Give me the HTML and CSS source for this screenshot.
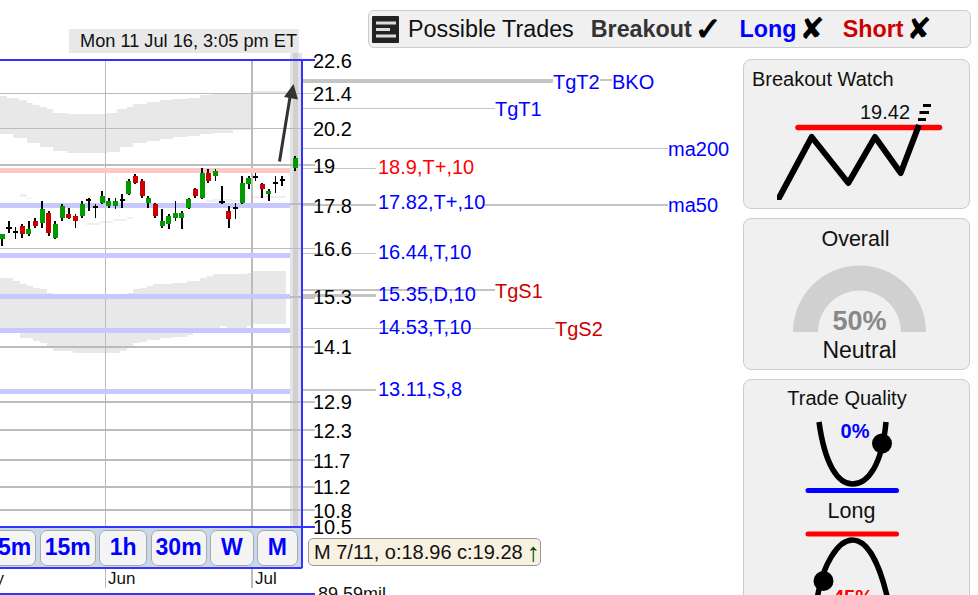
FILE: index.html
```html
<!DOCTYPE html>
<html lang="en">
<head>
<meta charset="utf-8">
<title>Possible Trades</title>
<link rel="stylesheet" href="styles.css">
</head>
<body>
<div class="page">
  <div class="chart">
    <svg class="canvas" width="743" height="595" viewBox="0 0 743 595">
      <rect class="stamp" x="69" y="29" width="230" height="24"/>
      <text class="t17" x="80" y="47">Mon 11 Jul 16, 3:05 pm ET</text>

      <rect class="band-light" x="290" y="53" width="12" height="474"/>
      <rect class="band-dark" x="293" y="53" width="5" height="474"/>

      <g transform="translate(0 20) scale(.33333)">
        <path class="cloud" d="M0 228H20V233H58V240H80V248H100V254H120V260H140V268H160V278H200V282H320V278H350V268H380V262H400V252H440V246H480V240H520V236H560V233H600V224H640V220H757V213H860V220H757V330H700V338H640V342H600V348H560V352H520V358H480V362H440V368H400V380H360V395H320V400H200V392H160V380H120V368H80V355H40V343H0Z"/>
        <path class="cloud-faint" d="M60 523H80V532H60ZM78 533H100V538H78ZM258 610H300V614H258ZM300 604H340V610H300ZM340 598H380V604H340ZM380 592H400V598H380ZM618 540H720V546H618ZM640 537H700V541H640ZM757 528H858V534H757Z"/>
      </g>
      <g transform="translate(0 240) scale(.33333)">
        <path class="cloud" d="M0 114H40V122H60V132H80V138H100V143H120V147H140V158H160V165H380V160H400V147H420V143H440V138H460V132H520V128H560V123H600V113H620V107H640V101H740V99H757V93H858V251H757V258H740V264H680V258H660V270H600V280H580V285H560V290H520V293H480V300H440V305H420V310H400V325H380V332H360V338H220V332H160V320H140V308H120V302H100V293H60V280H40V275H0Z"/>
      </g>

      <path class="grid" d="M105.5 60V527M105.5 568V588"/>
      <path class="grid2" d="M252 60V527M252 568V588"/>

      <path class="grid" d="M0 93.5H315M0 128.5H315M0 248.5H315"/>
      <path class="grid2" d="M0 165H315M0 204H315M0 297H315M0 347H315M0 402H315M0 430H315M0 460H315M0 487H315M0 509.5H315"/>

      <rect class="pink" x="0" y="168" width="290" height="5"/>
      <rect class="lilac" x="0" y="203" width="290" height="5"/>
      <rect class="lilac" x="0" y="253" width="290" height="5"/>
      <rect class="lilac" x="0" y="294" width="290" height="5"/>
      <rect class="lilac" x="0" y="328" width="290" height="5"/>
      <rect class="lilac" x="0" y="389" width="290" height="5"/>

      <g transform="translate(0 20) scale(.33333)">
        <path class="wick" d="M7 642V678M26 603V640M67 612V653M86 603V648M106 595V625M127 543V623M146 573V648M166 603V657M187 552V603M206 564V597M247 543V594M266 534V573M307 513V552M326 534V564M367 522V564M386 477V526M406 462V492M427 477V534M445 528V564M466 549V594M487 567V624M506 582V627M546 573V627M566 534V567M586 504V534M607 444V537M625 447V489M666 498V552M686 558V624M727 468V552M746 468V507M787 489V534M806 507V543M847 468V498M886 408V453"/>
        <path class="wick-thin" d="M46 620V657M226 582V623M286 552V594M346 534V567M526 543V603M646 447V483M706 549V597M766 460V483M826 468V519"/>
        <path class="dash" d="M17 625H35M38 635H54M258 539H274M279 560H294M359 539H375M658 547H674M698 565H714M758 470H774M819 489H833M839 480H855"/>
        <path class="up" d="M7 642V657M127 568V608M166 612V654M187 558V594M247 552V588M307 528V549M326 543V558M346 543V558M386 483V522M445 534V549M487 603V618M506 588V612M526 579V594M546 579V594M566 537V564M607 459V534M646 453V468M727 489V549M746 474V491M806 513V522M886 414V444M86 628V642"/>
        <path class="down" d="M67 618V642M106 603V618M146 580V638M206 583V594M226 588V603M406 468V489M427 483V528M466 552V588M586 507V528M625 459V484M686 573V597M787 492V507"/>
      </g>

      <path class="arrow-line" d="M279.5 161.5L290.5 94"/>
      <path class="arrow-head" d="M293.5 84L284 97L298 99.5Z"/>

      <path class="frame" d="M0 60H315M301.5 60V568M0 527H315M0 568H301.5M0 593.5H315M301.5 593.5V595"/>

      <path class="lead" d="M303 108.5H495M303 148.5H668M303 168.5H376M303 253.5H376M303 328.5H555M303 93.5H315M303 128.5H315"/>
      <path class="lead2" d="M303 165H315M303 204.5H376M484 205H668M303 290H495M303 347H315M303 390H376M303 402H315M303 430H315M303 460H315M303 487H315M303 510H315M600 80H612"/>
      <path class="lead4" d="M303 81H553"/>
      <path class="lead3" d="M303 295H376M303 297.500H315"/>

      <g class="prices">
        <text x="313" y="68">22.6</text>
        <text x="313" y="101">21.4</text>
        <text x="313" y="136">20.2</text>
        <text x="313" y="173">19</text>
        <text x="313" y="213">17.8</text>
        <text x="313" y="256">16.6</text>
        <text x="313" y="304">15.3</text>
        <text x="313" y="354">14.1</text>
        <text x="313" y="409">12.9</text>
        <text x="313" y="438">12.3</text>
        <text x="313" y="468">11.7</text>
        <text x="313" y="494">11.2</text>
        <text x="313" y="518">10.8</text>
        <text x="313" y="534">10.5</text>
      </g>

      <g class="notes">
        <text class="hot" x="378" y="174">18.9,T+,10</text>
        <text x="378" y="209">17.82,T+,10</text>
        <text x="378" y="259">16.44,T,10</text>
        <text x="378" y="301">15.35,D,10</text>
        <text x="378" y="334">14.53,T,10</text>
        <text x="378" y="396">13.11,S,8</text>
        <text x="553" y="89">TgT2</text>
        <text x="612" y="89">BKO</text>
        <text x="495" y="116">TgT1</text>
        <text x="668" y="156">ma200</text>
        <text x="668" y="212">ma50</text>
        <text class="stop" x="495" y="298">TgS1</text>
        <text class="stop" x="555" y="336">TgS2</text>
      </g>

      <text class="month" x="4" y="584" text-anchor="end">May</text>
      <text class="month" x="108" y="584">Jun</text>
      <text class="month" x="255" y="584">Jul</text>
      <text class="vol" x="318" y="600">89.59mil</text>
    </svg>

    <div class="timeframes">
      <button class="tf">5m</button>
      <button class="tf">15m</button>
      <button class="tf tf-wide">1h</button>
      <button class="tf">30m</button>
      <button class="tf tf-w">W</button>
      <button class="tf tf-wide">M</button>
    </div>

    <div class="quote">M 7/11, o:18.96 c:19.28 <span class="quote-up">↑</span></div>
  </div>

  <header class="topbar">
    <svg class="menu" width="27" height="27" viewBox="0 0 27 27">
      <rect width="27" height="27" rx="1" fill="#222"/>
      <path d="M4 7H24M4 13.500H18M4 20H24" stroke="#ddd" stroke-width="3"/>
    </svg>
    <span class="topbar-title">Possible Trades</span>
    <span class="signal signal-breakout">Breakout<i class="mark mark-yes">✓</i></span>
    <span class="signal signal-long">Long<i class="mark mark-no">✘</i></span>
    <span class="signal signal-short">Short<i class="mark mark-no">✘</i></span>
  </header>

  <aside class="side">
    <section class="card card-watch">
      <h2 class="card-title card-title-left">Breakout Watch</h2>
      <svg class="fig" width="226" height="150" viewBox="743 59 226 150">
        <defs><clipPath id="zig-clip"><rect x="777" y="100" width="180" height="100"/></clipPath></defs>
        <text class="fig-val" x="860" y="119">19.42</text>
        <path class="rule-red" d="M798 127.500H939.500"/>
        <path class="zig" clip-path="url(#zig-clip)" d="M772 211L811.700 137L848.300 183L875 137L900.700 173L919 125"/>
        <path class="zig-dash" d="M918 119.500H926M919.500 112.500H929M923 105.500H931"/>
      </svg>
    </section>

    <section class="card card-overall">
      <h2 class="card-title">Overall</h2>
      <svg class="fig" width="226" height="152" viewBox="743 218 226 152">
        <path class="gauge" d="M793 332A66.500 66.500 0 0 1 926 332H901A41.500 41.500 0 0 0 818 332Z"/>
        <text class="gauge-val" x="859.500" y="330" text-anchor="middle">50%</text>
        <text class="gauge-word" x="859.500" y="358" text-anchor="middle">Neutral</text>
      </svg>
    </section>

    <section class="card card-quality">
      <h2 class="card-title card-title-quality">Trade Quality</h2>
      <svg class="fig" width="226" height="236" viewBox="743 379 226 236">
        <path class="curve" d="M819 422C825 465 838 484 852.500 484C868 484 882 465 886 422"/>
        <circle cx="882" cy="443.500" r="10"/>
        <text class="pct pct-blue" x="855" y="438" text-anchor="middle">0%</text>
        <path class="rule-blue" d="M808 490.500H896.500"/>
        <text class="fig-word" x="851.500" y="518" text-anchor="middle">Long</text>
        <path class="rule-red-thin" d="M808 534H896.500"/>
        <path class="curve" d="M817 600C822 565 838 540 852.500 540C868 540 880 565 888 600"/>
        <circle cx="823.500" cy="581" r="10"/>
        <text class="pct pct-red" x="853" y="604" text-anchor="middle">45%</text>
      </svg>
    </section>
  </aside>
</div>
</body>
</html>
```
FILE: styles.css
```css
* { box-sizing: border-box; }
html, body { margin: 0; padding: 0; background: #fff; }
body { font-family: "Liberation Sans", Arial, sans-serif; color: #000; overflow: hidden; }

.page {
  display: grid;
  grid-template-columns: 743px 227px 8px;
  grid-template-rows: 59px 536px;
  width: 978px;
  height: 595px;
  overflow: hidden;
}

/* chart: free canvas */
.chart { grid-column: 1; grid-row: 1 / 3; position: relative; width: 743px; height: 595px; }
.canvas { display: block; overflow: hidden; }
.canvas text { font-family: "Liberation Sans", Arial, sans-serif; }
.stamp { fill: #e8e8e8; }
.t17 { font-size: 18.200px; fill: #111; }
.band-light { fill: #e4e4e4; }
.band-dark { fill: #d0d0d0; }
.cloud { fill: #e8e8e8; shape-rendering: crispEdges; }
.cloud-faint { fill: #efefef; shape-rendering: crispEdges; }
.grid { stroke: #bbb; stroke-width: 1; fill: none; shape-rendering: crispEdges; }
.grid2 { stroke: #bbb; stroke-width: 2; fill: none; shape-rendering: crispEdges; }
.pink { fill: #ffc8c8; }
.lilac { fill: #c8c8ff; }
.wick { stroke: #000; stroke-width: 6; fill: none; shape-rendering: crispEdges; }
.wick-thin { stroke: #000; stroke-width: 3; fill: none; shape-rendering: crispEdges; }
.dash { stroke: #000; stroke-width: 6; fill: none; shape-rendering: crispEdges; }
.up { stroke: #090; stroke-width: 15; fill: none; shape-rendering: crispEdges; }
.down { stroke: #c00; stroke-width: 15; fill: none; shape-rendering: crispEdges; }
.arrow-line { stroke: #333; stroke-width: 3; fill: none; }
.arrow-head { fill: #333; }
.frame { stroke: #33f; stroke-width: 2; fill: none; shape-rendering: crispEdges; }
.lead { stroke: #c4c4c4; stroke-width: 1; fill: none; shape-rendering: crispEdges; }
.lead2 { stroke: #c4c4c4; stroke-width: 2; fill: none; shape-rendering: crispEdges; }
.lead3 { stroke: #c4c4c4; stroke-width: 3; fill: none; shape-rendering: crispEdges; }
.lead4 { stroke: #c4c4c4; stroke-width: 4; fill: none; shape-rendering: crispEdges; }
.prices text { font-size: 20px; fill: #000; }
.notes text { font-size: 20px; fill: #00f; }
.notes .hot { fill: #f00; }
.notes .stop { fill: #c00; }
.month { font-size: 17px; fill: #111; }
.vol { font-size: 18px; fill: #111; }

.timeframes {
  position: absolute;
  left: 0;
  top: 528px;
  width: 301px;
  height: 39px;
  display: flex;
  justify-content: flex-end;
  align-items: center;
  gap: 3.500px;
  padding-right: 3.500px;
  background: #c8d8e8;
  overflow: hidden;
}
.tf {
  flex: none;
  height: 36px;
  margin: 0;
  padding: 0 4px;
  border: 1px solid #aaa;
  border-radius: 7px;
  background: #f4f4f4;
  color: #00f;
  font: bold 23px "Liberation Sans", Arial, sans-serif;
}
.tf-wide { padding: 0 9.500px; }
.tf-w { padding: 0 10px; }

.quote {
  position: absolute;
  left: 308px;
  top: 538px;
  width: 233px;
  height: 28px;
  display: flex;
  align-items: center;
  gap: 4px;
  padding-left: 5px;
  border: 1px solid #999;
  border-radius: 5px;
  background: #f8f0e0;
  font-size: 20px;
  white-space: nowrap;
  color: #111;
}
.quote-up { color: #040; font-size: 26px; line-height: 20px; }

/* top bar */
.topbar {
  grid-column: 1 / 3;
  grid-row: 1;
  z-index: 1;
  align-self: start;
  display: flex;
  align-items: center;
  margin: 10px 0 0 368px;
  height: 38px;
  width: 603px;
  padding-left: 3px;
  background: #f0f0f0;
  border: 1px solid #ccc;
  border-radius: 6px;
  font-size: 23.300px;
}
.menu { flex: none; }
.topbar-title { margin-left: 9px; color: #111; }
.signal { font-weight: bold; display: inline-flex; align-items: center; }
.signal-breakout { margin-left: 17px; color: #333; }
.signal-long { margin-left: 18px; color: #00f; }
.signal-short { margin-left: 18px; color: #c00; }
.mark { color: #000; margin-left: 3px; }
.mark-yes {
  font: bold 32px/30px "DejaVu Sans", sans-serif;
  -webkit-text-stroke: 1.200px #000;
}
.mark-no { font: normal 30px/30px "DejaVu Sans", sans-serif; }

/* side cards */
.side {
  grid-column: 2;
  grid-row: 2;
  display: flex;
  flex-direction: column;
  gap: 9px;
  height: 536px;
}
.card {
  position: relative;
  flex: none;
  width: 227px;
  background: #f0f0f0;
  border: 1px solid #ccc;
  border-radius: 8px;
  overflow: hidden;
}
.card-watch { height: 150px; }
.card-overall { height: 152px; }
.card-quality { height: 236px; }
.card-title { margin: 0; font-size: 20px; font-weight: normal; text-align: center; color: #111; }
.card-title-left { text-align: left; padding: 8px 0 0 8px; }
.card-overall .card-title { font-size: 21.500px; padding: 8px 2px 0 0; }
.card-title-quality { padding: 7px 19px 0 0; }
.fig { position: absolute; left: -1px; top: -1px; display: block; }
.fig text { font-family: "Liberation Sans", Arial, sans-serif; }
.fig-val { font-size: 20px; fill: #111; }
.rule-red { stroke: #f00; stroke-width: 5.500; stroke-linecap: round; fill: none; }
.rule-red-thin { stroke: #f00; stroke-width: 5; stroke-linecap: round; fill: none; }
.rule-blue { stroke: #00f; stroke-width: 5; stroke-linecap: round; fill: none; }
.zig { stroke: #000; stroke-width: 6; stroke-linejoin: round; fill: none; }
.zig-dash { stroke: #000; stroke-width: 3; fill: none; }
.gauge { fill: #d0d0d0; }
.gauge-val { font-size: 27px; font-weight: bold; fill: #888; }
.gauge-word { font-size: 23px; fill: #111; }
.curve { stroke: #000; stroke-width: 5.500; fill: none; }
.pct { font-size: 20px; font-weight: bold; }
.pct-blue { fill: #00f; }
.pct-red { fill: #f00; }
.fig-word { font-size: 21.500px; fill: #111; }
```
